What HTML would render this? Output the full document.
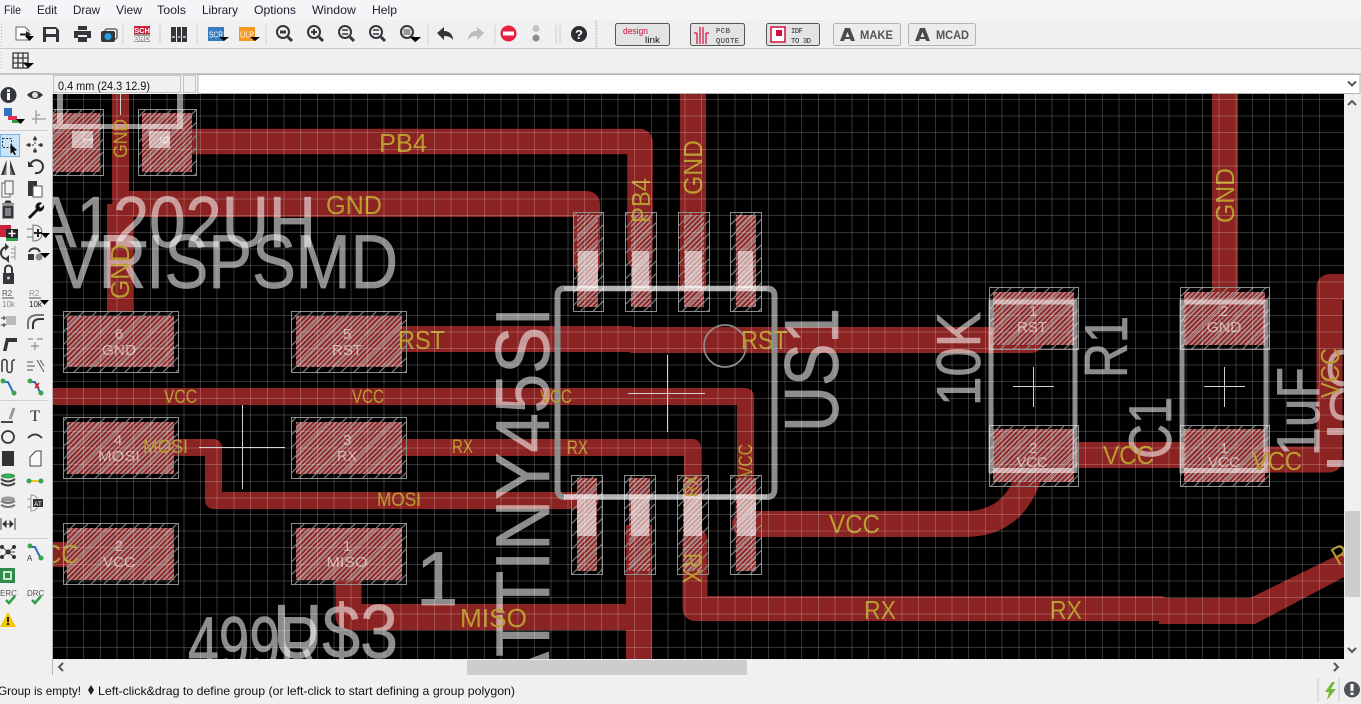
<!DOCTYPE html>
<html><head><meta charset="utf-8"><title>EAGLE board editor</title>
<style>
html,body{margin:0;padding:0;background:#f0f0f0;overflow:hidden}
svg{display:block;font-family:"Liberation Sans",sans-serif}
.m{font-size:12px;fill:#1c1c2c}
.g{fill:#b89c2c}
.l{fill:#fff;stroke:#fff;stroke-width:.7;opacity:.55}
.p{fill:#fff;opacity:.55;font-size:15px;text-anchor:middle}
.i{fill:#33373b}
.is{fill:none;stroke:#33373b;stroke-width:2}
</style></head><body>
<svg width="1361" height="704" viewBox="0 0 1361 704" xmlns="http://www.w3.org/2000/svg">
<defs>
<pattern id="h" width="3.500" height="3.500" patternUnits="userSpaceOnUse" patternTransform="rotate(-45)"><rect width="3.500" height="3.500" fill="#8b2323"/><rect width="3.500" height="1.600" fill="#bb8e8e"/></pattern>
<pattern id="s" width="9" height="9" patternUnits="userSpaceOnUse" patternTransform="rotate(-45)"><rect width="9" height="1" fill="#8c8c8c"/></pattern>
<clipPath id="c"><rect x="53" y="94" width="1291" height="565"/></clipPath>
</defs>
<rect width="1361" height="704" fill="#f0f0f0"/>
<rect width="1361" height="20" fill="#f4f5f7"/>
<text class="m" x="4" y="14" textLength="17" lengthAdjust="spacingAndGlyphs">File</text>
<text class="m" x="37" y="14" textLength="20" lengthAdjust="spacingAndGlyphs">Edit</text>
<text class="m" x="73" y="14" textLength="27" lengthAdjust="spacingAndGlyphs">Draw</text>
<text class="m" x="116" y="14" textLength="26" lengthAdjust="spacingAndGlyphs">View</text>
<text class="m" x="157" y="14" textLength="29" lengthAdjust="spacingAndGlyphs">Tools</text>
<text class="m" x="202" y="14" textLength="36" lengthAdjust="spacingAndGlyphs">Library</text>
<text class="m" x="254" y="14" textLength="42" lengthAdjust="spacingAndGlyphs">Options</text>
<text class="m" x="312" y="14" textLength="44" lengthAdjust="spacingAndGlyphs">Window</text>
<text class="m" x="372" y="14" textLength="25" lengthAdjust="spacingAndGlyphs">Help</text>
<rect y="48" width="1361" height="1" fill="#c8c8c8"/>
<rect y="73" width="1361" height="2" fill="#c8c8c8"/>
<path d="M1.5 24V46M1.5 52V70M597 22V47" stroke="#c0c0c0" stroke-dasharray="1 2"/>
<path d="M123 25V44M160 25V44M197 25V44M266 25V44M428 25V44M495 25V44M556 25V44M560 25V44M596 20V48" stroke="#cfcfcf"/>

<!-- top toolbar -->
<path d="M16 27H25L29 31V40H16Z" fill="#fff" stroke="#666"/><path d="M20 33.500H26V31L31 34.500 26 38V35.500H20Z" fill="#222"/><path d="M25 36H34L29.500 41Z" fill="#000"/>
<path class="i" d="M43 27H56L59 30V42H43ZM46 29V34H56V29ZM46 37V42H56V37Z" fill-rule="evenodd"/>
<path class="i" d="M78 26H87V30H78ZM74 31H91V38H87V35H78V38H74ZM78 37H87V42H78Z"/>
<rect x="105" y="29" width="12" height="10" rx="2" fill="none" stroke="#666" stroke-width="1.500"/><rect x="101" y="31" width="14" height="11" rx="2" fill="#33373b"/><circle cx="108" cy="36.500" r="3.500" fill="#29a0e0"/>
<rect x="134" y="26" width="16" height="8" fill="#c8233a"/><rect x="134" y="34" width="16" height="8" fill="#9a9a9a"/>
<text x="142" y="33" font-size="7.500" font-weight="bold" fill="#fff" text-anchor="middle">SCH</text>
<text x="142" y="41" font-size="7.500" font-weight="bold" fill="#fff" text-anchor="middle">BRD</text>
<path class="i" d="M171 27H176V42H171ZM177 27H181V42H177ZM182 27H187V42H182Z"/><path d="M172 37H175M178 37H180M183 37H186" stroke="#aaa" stroke-width="2"/>
<rect x="208" y="27" width="16" height="14" fill="#3a7cc0"/><text x="209" y="37.500" font-size="8" fill="#fff" textLength="14" lengthAdjust="spacingAndGlyphs">SCR</text><path d="M219 37H229L224 41Z" fill="#000"/>
<rect x="239" y="27" width="16" height="14" fill="#f59a1e"/><text x="240" y="37.500" font-size="8" fill="#fff" textLength="14" lengthAdjust="spacingAndGlyphs">ULP</text><path d="M250 37H260L255 41Z" fill="#000"/>
<g class="is" fill="none" stroke="#33373b" stroke-width="2">
<circle cx="283" cy="32" r="6"/><path d="M288 37L292 41" stroke-width="3"/><path d="M280 32H286" stroke-width="3"/>
<circle cx="314" cy="32" r="6"/><path d="M319 37L323 41" stroke-width="3"/><path d="M311 32H317M314 29V35"/>
<circle cx="345" cy="32" r="6"/><path d="M350 37L354 41" stroke-width="3"/><path d="M342 30H348M342 34H348" stroke-width="1.500"/>
<circle cx="376" cy="32" r="6"/><path d="M381 37L385 41" stroke-width="3"/><path d="M373 30H379M373 34H379" stroke-width="1.500"/>
<circle cx="407" cy="32" r="6"/><path d="M412 37L416 41" stroke-width="3"/></g>
<rect x="403.500" y="29" width="7" height="6" fill="#999"/><path d="M410 37H421L415.500 42Z" fill="#000"/>
<path class="i" d="M437 33L444 27V31C450 31 453 35 453 40 451 37 448 36 444 36V40Z"/>
<path fill="#bdbdbd" d="M484 33L477 27V31C471 31 468 35 468 40 470 37 473 36 477 36V40Z"/>
<circle cx="508.500" cy="33.500" r="8" fill="#e8203f"/><rect x="503" y="31.500" width="11" height="4" fill="#fff"/>
<circle cx="536" cy="28.500" r="3.500" fill="#c4c4c4"/><circle cx="536" cy="38" r="3.500" fill="#8c8c8c"/>
<circle cx="579" cy="34" r="8" fill="#2a2d31"/><text x="579" y="39" font-size="13" font-weight="bold" fill="#fff" text-anchor="middle">?</text>

<!-- buttons -->
<g stroke="#555" fill="#e3e3e3"><rect x="615.500" y="23.500" width="54" height="22" rx="2"/><rect x="690.500" y="23.500" width="54" height="22" rx="2"/><rect x="766.500" y="23.500" width="53" height="22" rx="2"/></g>
<g stroke="#b4b4b4" fill="#ececec"><rect x="833.500" y="23.500" width="67" height="22" rx="2"/><rect x="908.500" y="23.500" width="67" height="22" rx="2"/></g>
<text x="623" y="34" font-size="9" fill="#d0103a" textLength="25" lengthAdjust="spacingAndGlyphs">design</text>
<text x="645" y="43" font-size="9" fill="#111" textLength="15" lengthAdjust="spacingAndGlyphs">link</text>
<path d="M697 44V33M700 44V30M703 44V30M706 44V33M694 33H697M709 33H706M700 30V27M703 30V27" stroke="#d0103a" stroke-width="1.200" fill="none"/>
<text x="716" y="33" font-size="7" fill="#222" textLength="14" lengthAdjust="spacing" font-family="Liberation Mono">PCB</text>
<text x="716" y="43" font-size="7" fill="#222" textLength="23" lengthAdjust="spacing" font-family="Liberation Mono">QUOTE</text>
<rect x="771" y="27" width="14" height="15" fill="#fff" stroke="#d0103a" stroke-width="1.500"/><rect x="776" y="30" width="6" height="6" fill="#d0103a"/>
<text x="791" y="33" font-size="7" fill="#222" font-family="Liberation Mono" textLength="12" lengthAdjust="spacing">IDF</text>
<text x="791" y="43" font-size="7" fill="#222" font-family="Liberation Mono" textLength="20" lengthAdjust="spacing">TO 3D</text>
<path d="M845 28H850L855 41H851L847.500 32 844 41H840ZM843 37H851V39H843Z" fill="#4a4a4a"/>
<text x="860" y="39" font-size="12" font-weight="bold" fill="#555" textLength="33" lengthAdjust="spacingAndGlyphs">MAKE</text>
<path d="M920 28H925L930 41H926L922.500 32 919 41H915ZM918 37H926V39H918Z" fill="#4a4a4a"/>
<text x="936" y="39" font-size="12" font-weight="bold" fill="#555" textLength="33" lengthAdjust="spacingAndGlyphs">MCAD</text>

<!-- second toolbar -->
<path d="M13 53H28V68H13ZM18 53V68M23 53V68M13 58H28M13 63H28" fill="none" stroke="#33373b" stroke-width="1.300"/><path d="M23 63H34L28.500 68Z" fill="#000"/>

<!-- coordinate row -->
<rect x="53.500" y="75.500" width="127" height="17" fill="#f0f0f0" stroke="#c4c4c4"/>
<rect x="183.500" y="75.500" width="12" height="17" fill="#f0f0f0" stroke="#c4c4c4"/>
<rect x="198" y="74.500" width="1162" height="19" fill="#fff" stroke="#b4b4b4"/>
<path d="M1348 81.500L1352 85.500 1356 81.500" fill="none" stroke="#555" stroke-width="2"/>
<text x="58" y="90" font-size="12" fill="#111" textLength="92" lengthAdjust="spacingAndGlyphs">0.4 mm (24.3 12.9)</text>

<!-- canvas -->
<rect x="53" y="94" width="1291" height="565" fill="#000"/>
<g clip-path="url(#c)">
<!-- copper -->
<g fill="none" stroke="#8b2323" stroke-linejoin="round" stroke-linecap="round">
<path stroke-width="25.500" d="M180 141.500H640V258"/>
<path stroke-width="26" d="M693 90V290" stroke-linecap="butt"/>
<path stroke-width="26" d="M125 204H587V265"/>
<path stroke-width="26" d="M120 204V312" stroke-linecap="butt"/>
<path stroke-width="17" d="M120.500 90V200" stroke-linecap="butt"/>
<path stroke-width="26" d="M402 339H632" stroke-linecap="butt"/>
<path stroke-width="26" d="M630 340H1030" stroke-linecap="butt"/>
<path stroke-width="26" d="M1030 340H1031"/>
<path stroke-width="17" d="M50 396.500H745.500V480"/>
<path stroke-width="17" d="M402 447.500H692.500V480"/>
<path stroke-width="17" d="M170 447.500H213.500V500.500H590"/>
<path stroke-width="26" d="M348.500 575V617H639"/>
<path stroke-width="26" d="M639 525V665" stroke-linecap="butt"/>
<path stroke-width="25" d="M50 554.500H70" stroke-linecap="butt"/>
<path stroke-width="26" d="M745 524H965Q1012 524 1028 478"/>
<path stroke-width="26" d="M1075 455H1185" stroke-linecap="butt"/>
<path stroke-width="26" d="M1265 459.500H1329.500V287H1360"/>
<path stroke-width="26" d="M1225 90V300" stroke-linecap="butt"/>
<path stroke-width="25" d="M695 540V608.500H1160"/>
</g>
<path fill="#8b2323" d="M1159 598H1250L1350 549V574L1255 624H1159Z"/>
<!-- pads -->
<path fill="url(#h)" d="M53 113H100V172H53ZM142 113H192V172H142ZM67 316H174V367H67ZM296 316H402V367H296ZM67 422H174V474H67ZM296 422H402V474H296ZM67 528H174V580H67ZM296 528H402V580H296ZM577 215H598V307H577ZM631 215H651V307H631ZM684 215H704V307H684ZM736 215H756V307H736ZM577 478H597V571H577ZM629 478H650V571H629ZM683 478H702V571H683ZM736 478H756V571H736ZM993 292H1074V345H993ZM993 429H1074V482H993ZM1184 292H1265V345H1184ZM1184 429H1265V482H1184Z"/>
<path fill="url(#s)" stroke="#8c8c8c" d="M50.500 109.500H103.500V175.500H50.500ZM138.500 109.500H196.500V175.500H138.500ZM63.500 311.500H178.500V372.500H63.500ZM291.500 311.500H406.500V372.500H291.500ZM63.500 417.500H178.500V478.500H63.500ZM291.500 417.500H406.500V478.500H291.500ZM63.500 523.500H178.500V584.500H63.500ZM291.500 523.500H406.500V584.500H291.500ZM573.500 212.500H603.500V311.500H573.500ZM625.500 212.500H656.500V311.500H625.500ZM678.500 212.500H709.500V311.500H678.500ZM730.500 212.500H761.500V311.500H730.500ZM571.500 475.500H602.500V574.500H571.500ZM624.500 475.500H655.500V574.500H624.500ZM677.500 475.500H708.500V574.500H677.500ZM730.500 475.500H761.500V574.500H730.500ZM989.500 287.500H1078.500V349.500H989.500ZM989.500 425.500H1078.500V486.500H989.500ZM1180.500 287.500H1269.500V349.500H1180.500ZM1180.500 425.500H1269.500V486.500H1180.500Z"/>

<!-- docu overlays -->
<path fill="#fff" opacity=".55" d="M578 251H598V288H578ZM632 251H649V288H632ZM685 251H702V288H685ZM738 251H753V288H738ZM577 500H596V536H577ZM631 500H649V536H631ZM684 500H702V536H684ZM737 500H756V536H737ZM72 131H93V148H72ZM149 131H170V148H149Z"/>
<path fill="#fff" opacity=".55" d="M53 124H183V129H53ZM57 94H63V124H57ZM177 94H183V124H177Z"/>

<!-- IC outline -->
<path d="M564 288.500Q557.500 288.500 557.500 296V489Q557.500 497 565 497M767 288.500Q774.500 288.500 774.500 296V489Q774.500 497 767 497" fill="none" stroke="#8c8c8c" stroke-width="6"/>
<path d="M564 288.500H767M564 497H767" stroke="#fff" stroke-width="5.500" opacity=".7"/>
<circle cx="725" cy="346" r="21" fill="none" stroke="#8c8c8c" stroke-width="1.700"/>
<!-- R1 / C1 packages -->
<rect x="991" y="302" width="84" height="168.500" fill="none" stroke="#fff" stroke-width="5" opacity=".55"/>
<rect x="1182" y="302" width="84" height="168.500" fill="none" stroke="#fff" stroke-width="5" opacity=".55"/>
<!-- crosshairs -->
<path d="M628 393.500H705M667.500 355V432M199 447.500H285M242.500 405V489M1013 386.500H1054M1033.500 367V407M1204 386.500H1245M1224.500 367V407M120.500 94V115" stroke="#d0d0d0" stroke-width="1"/>

<!-- grey names / values -->
<g font-size="76">
<text class="l" x="33" y="247" font-size="72" textLength="283" lengthAdjust="spacingAndGlyphs">A1202UH</text>
<text class="l" x="55" y="288" textLength="343" lengthAdjust="spacingAndGlyphs">VRISPSMD</text>
<text class="l" transform="translate(549,699) rotate(-90)" textLength="392" lengthAdjust="spacingAndGlyphs">ATTINY45SI</text>
<text class="l" transform="translate(838,432) rotate(-90)" textLength="124" lengthAdjust="spacingAndGlyphs">US1</text>
<text class="l" transform="translate(980,406) rotate(-90)" font-size="62" textLength="94" lengthAdjust="spacingAndGlyphs">10K</text>
<text class="l" transform="translate(1127,378) rotate(-90)" font-size="60" textLength="62" lengthAdjust="spacingAndGlyphs">R1</text>
<text class="l" transform="translate(1171,459) rotate(-90)" font-size="60" textLength="62" lengthAdjust="spacingAndGlyphs">C1</text>
<text class="l" transform="translate(1319,456) rotate(-90)" font-size="60" textLength="89" lengthAdjust="spacingAndGlyphs">1uF</text>
<text class="l" x="416" y="605">1</text>
<text class="l" x="188" y="670" textLength="132" lengthAdjust="spacingAndGlyphs">499R</text>
<text class="l" x="273" y="658" textLength="125" lengthAdjust="spacingAndGlyphs">U$3</text>
</g>
<path d="M1327 428H1344V435H1327ZM1327 460H1344V467H1327Z" fill="#fff" opacity=".55"/>
<path d="M1344 352Q1330 352 1330 368T1344 384M1344 390Q1332 392 1332 405T1344 418" fill="none" stroke="#fff" stroke-width="5" opacity=".55"/>

<!-- pad names -->
<text class="p" x="119" y="339">6</text><text class="p" x="119" y="355" textLength="34" lengthAdjust="spacingAndGlyphs">GND</text>
<text class="p" x="347" y="339">5</text><text class="p" x="347" y="355" textLength="30" lengthAdjust="spacingAndGlyphs">RST</text>
<text class="p" x="118" y="445">4</text><text class="p" x="119" y="461" textLength="42" lengthAdjust="spacingAndGlyphs">MOSI</text>
<text class="p" x="347" y="445">3</text><text class="p" x="347" y="461" textLength="20" lengthAdjust="spacingAndGlyphs">RX</text>
<text class="p" x="119" y="551">2</text><text class="p" x="119" y="567" textLength="32" lengthAdjust="spacingAndGlyphs">VCC</text>
<text class="p" x="347" y="551">1</text><text class="p" x="347" y="567" textLength="41" lengthAdjust="spacingAndGlyphs">MISO</text>
<text class="p" x="1033" y="316">1</text><text class="p" x="1032" y="332" textLength="30" lengthAdjust="spacingAndGlyphs">RST</text>
<text class="p" x="1033" y="453">2</text><text class="p" x="1032" y="467" textLength="31" lengthAdjust="spacingAndGlyphs">VCC</text>
<text class="p" x="1224" y="316">2</text><text class="p" x="1224" y="332" textLength="35" lengthAdjust="spacingAndGlyphs">GND</text>
<text class="p" x="1224" y="453">1</text><text class="p" x="1224" y="467" textLength="32" lengthAdjust="spacingAndGlyphs">VCC</text>
<text class="p" transform="translate(93,140) rotate(-90)">1</text>
<text class="p" transform="translate(170,140) rotate(-90)">6</text>

<!-- gold signal names -->
<g font-size="26">
<text class="g" x="379" y="152" textLength="48" lengthAdjust="spacingAndGlyphs">PB4</text>
<text class="g" x="326" y="214" textLength="56" lengthAdjust="spacingAndGlyphs">GND</text>
<text class="g" x="398" y="349" textLength="47" lengthAdjust="spacingAndGlyphs">RST</text>
<text class="g" x="741" y="349" textLength="47" lengthAdjust="spacingAndGlyphs">RST</text>
<text class="g" x="829" y="533" textLength="51" lengthAdjust="spacingAndGlyphs">VCC</text>
<text class="g" x="864" y="619" textLength="32" lengthAdjust="spacingAndGlyphs">RX</text>
<text class="g" x="1050" y="619" textLength="32" lengthAdjust="spacingAndGlyphs">RX</text>
<text class="g" x="460" y="627" textLength="67" lengthAdjust="spacingAndGlyphs">MISO</text>
<text class="g" x="27" y="563" textLength="52" lengthAdjust="spacingAndGlyphs">VCC</text>
<text class="g" x="1103" y="464" textLength="51" lengthAdjust="spacingAndGlyphs">VCC</text>
<text class="g" x="1252" y="470" textLength="50" lengthAdjust="spacingAndGlyphs">VCC</text>
<text class="g" transform="translate(702,195) rotate(-90)" textLength="55" lengthAdjust="spacingAndGlyphs">GND</text>
<text class="g" transform="translate(650,223) rotate(-90)" textLength="45" lengthAdjust="spacingAndGlyphs">PB4</text>
<text class="g" transform="translate(129,299) rotate(-90)" textLength="55" lengthAdjust="spacingAndGlyphs">GND</text>
<text class="g" transform="translate(1234,223) rotate(-90)" textLength="55" lengthAdjust="spacingAndGlyphs">GND</text>
<text class="g" transform="translate(1339,398) rotate(-90)" textLength="50" lengthAdjust="spacingAndGlyphs">VCC</text>
<text class="g" transform="translate(683,553) rotate(90)" textLength="30" lengthAdjust="spacingAndGlyphs">RX</text>
<text class="g" transform="translate(1338,566) rotate(-30)" textLength="30" lengthAdjust="spacingAndGlyphs">RX</text>
</g>
<g font-size="19">
<text class="g" x="164" y="403" textLength="33" lengthAdjust="spacingAndGlyphs">VCC</text>
<text class="g" x="352" y="403" textLength="32" lengthAdjust="spacingAndGlyphs">VCC</text>
<text class="g" x="540" y="403" textLength="32" lengthAdjust="spacingAndGlyphs">VCC</text>
<text class="g" x="143" y="453" textLength="45" lengthAdjust="spacingAndGlyphs">MOSI</text>
<text class="g" x="452" y="453" textLength="21" lengthAdjust="spacingAndGlyphs">RX</text>
<text class="g" x="567" y="454" textLength="21" lengthAdjust="spacingAndGlyphs">RX</text>
<text class="g" x="377" y="506" textLength="44" lengthAdjust="spacingAndGlyphs">MOSI</text>
<text class="g" transform="translate(127,158) rotate(-90)" textLength="39" lengthAdjust="spacingAndGlyphs">GND</text>
<text class="g" transform="translate(752,477) rotate(-90)" textLength="33" lengthAdjust="spacingAndGlyphs">VCC</text>
<text class="g" transform="translate(698,497) rotate(-90)" textLength="22" lengthAdjust="spacingAndGlyphs">RX</text>
</g>

<!-- grid -->
<path fill="none" stroke="#fff" stroke-opacity=".2" shape-rendering="crispEdges" d="M50.200 94v565m16.700-565v565m16.700-565v565m16.700-565v565m16.700-565v565m16.700-565v565m16.700-565v565m16.700-565v565m16.700-565v565m16.700-565v565m16.700-565v565m16.700-565v565m16.700-565v565m16.700-565v565m16.700-565v565m16.700-565v565m16.700-565v565m16.700-565v565m16.700-565v565m16.700-565v565m16.700-565v565m16.700-565v565m16.700-565v565m16.700-565v565m16.700-565v565m16.700-565v565m16.700-565v565m16.700-565v565m16.700-565v565m16.700-565v565m16.700-565v565m16.700-565v565m16.700-565v565m16.700-565v565m16.700-565v565m16.700-565v565m16.700-565v565m16.700-565v565m16.700-565v565m16.700-565v565m16.700-565v565m16.700-565v565m16.700-565v565m16.700-565v565m16.700-565v565m16.700-565v565m16.700-565v565m16.700-565v565m16.700-565v565m16.700-565v565m16.700-565v565m16.700-565v565m16.700-565v565m16.700-565v565m16.700-565v565m16.700-565v565m16.700-565v565m16.700-565v565m16.700-565v565m16.700-565v565m16.700-565v565m16.700-565v565m16.700-565v565m16.700-565v565m16.700-565v565m16.700-565v565m16.700-565v565m16.700-565v565m16.700-565v565m16.700-565v565m16.700-565v565m16.700-565v565m16.700-565v565m16.700-565v565m16.700-565v565m16.700-565v565m16.700-565v565"/>
<path fill="none" stroke="#fff" stroke-opacity=".2" shape-rendering="crispEdges" d="M53 99.500h1291m-1291 16.600h1291m-1291 16.600h1291m-1291 16.600h1291m-1291 16.600h1291m-1291 16.600h1291m-1291 16.600h1291m-1291 16.600h1291m-1291 16.600h1291m-1291 16.600h1291m-1291 16.600h1291m-1291 16.600h1291m-1291 16.600h1291m-1291 16.600h1291m-1291 16.600h1291m-1291 16.600h1291m-1291 16.600h1291m-1291 16.600h1291m-1291 16.600h1291m-1291 16.600h1291m-1291 16.600h1291m-1291 16.600h1291m-1291 16.600h1291m-1291 16.600h1291m-1291 16.600h1291m-1291 16.600h1291m-1291 16.600h1291m-1291 16.600h1291m-1291 16.600h1291m-1291 16.600h1291m-1291 16.600h1291m-1291 16.600h1291m-1291 16.600h1291m-1291 16.600h1291"/>
</g>

<!-- scrollbars -->
<rect x="53" y="659" width="1291" height="16" fill="#f0f0f0"/>
<rect x="467" y="660" width="280" height="15" fill="#cdcdcd"/>
<path d="M63 663L59 667 63 671M1334 663L1338 667 1334 671" fill="none" stroke="#555" stroke-width="2"/>
<rect x="1345" y="511" width="15" height="86" fill="#cdcdcd"/>
<path d="M1348 648L1352 652 1356 648M1348 105L1352 101 1356 105" fill="none" stroke="#555" stroke-width="2"/>
<rect x="52" y="94" width="1" height="581" fill="#b8b8b8"/>

<!-- left toolbar -->
<circle cx="8.500" cy="95" r="8" fill="#33373b"/><rect x="7" y="93" width="3" height="7" fill="#fff"/><rect x="7" y="89.500" width="3" height="2.500" fill="#fff"/>
<path d="M27 95Q35 87 43 95Q35 103 27 95Z" fill="#33373b"/><circle cx="35" cy="95" r="3" fill="#ddd"/>
<rect x="4" y="108" width="8" height="8" fill="#2d6fc0"/><rect x="8" y="116" width="9" height="4" fill="#e0304a"/><rect x="12" y="120" width="8" height="3" fill="#2e9e46"/><path d="M16 119H25L20.500 124Z" fill="#000"/>
<path d="M36 110V124M32 119H46M36 114V118M40 115H36" stroke="#999" stroke-width="1.200" fill="none"/>
<rect x="0" y="130" width="48" height="1" fill="#d0d0d0"/>
<rect x=".5" y="134.500" width="19" height="22" fill="#cce4f7" stroke="#7ab4e4"/>
<rect x="2.500" y="138.500" width="9" height="9" fill="none" stroke="#333" stroke-dasharray="2 1.500"/><path d="M10.500 144L17 150 14 151 16 154.500 14.500 155 12.500 152 10.500 154Z" fill="#111"/>
<circle cx="35" cy="139" r="1.800" fill="#33373b"/><circle cx="35" cy="151" r="1.800" fill="#33373b"/><circle cx="29" cy="145" r="1.800" fill="#33373b"/><circle cx="41" cy="145" r="1.800" fill="#33373b"/><path d="M35 136V154M26 145H44" stroke="#33373b" stroke-dasharray="2 4" fill="none"/>
<path d="M6.500 160V175H1ZM10 160V175H15.500Z" fill="#33373b"/><path d="M6.500 166V175H3.500ZM10 166V175H13Z" fill="#777"/>
<path d="M30 166A6.500 6.500 0 1 1 35 173" fill="none" stroke="#33373b" stroke-width="2"/><path d="M28 161V167H34Z" fill="#33373b"/>
<path d="M2 183H10V197H2Z" fill="#fff" stroke="#666"/><path d="M5 181H13V194H5Z" fill="#f4f4f4" stroke="#555"/>
<path d="M28 181H37V196H28Z" fill="#33373b"/><path d="M33 186H42V197H33Z" fill="#fff" stroke="#555"/>
<path d="M2 204H14M5 203L6 201H10L11 203M3 206H13V218H3Z" fill="#33373b" stroke="#33373b"/><path d="M6 208V216M8 208V216M10 208V216" stroke="#ccc"/>
<path d="M28 217L36 209C34 204 39 201 42 203L39 206 41 208 44 205C45 209 41 213 38 211L30 219Z" fill="#111"/>
<rect y="225" width="11" height="12" fill="#c8233a"/><rect x="6" y="229" width="12" height="9" fill="#262626"/><rect x="6" y="238" width="12" height="3" fill="#2e9e46"/><path d="M12 230V237M8.500 233.500H15.500" stroke="#fff" stroke-width="1.500"/>
<path d="M33 225V241Q42 241 42 233T33 225ZM27 229H33M27 237H33" fill="#eee" stroke="#777"/><path d="M34 233H42M38 229V237" stroke="#222" stroke-width="2"/><path d="M41 233H50L45.500 238Z" fill="#000"/>
<path d="M7 247A6 6 0 0 0 7 259" fill="none" stroke="#33373b" stroke-width="2"/><path d="M5 243L9 247 5 251ZM9 255L5 259 9 263Z" fill="#33373b"/><path d="M11 249H15M11 253H15M11 257H15M15 246V260" stroke="#999" fill="none"/>
<rect x="28" y="254" width="6" height="6" fill="#33373b"/><circle cx="39" cy="257" r="3.500" fill="#888"/><path d="M29 252A6 6 0 0 1 40 252" fill="none" stroke="#33373b" stroke-width="2"/><path d="M40 253H50L45 258Z" fill="#000"/>
<path d="M3 273H14V284H3Z" fill="#33373b"/><path d="M5 273V269A3.500 3.500 0 0 1 12 269V273" fill="none" stroke="#33373b" stroke-width="2"/><circle cx="8.500" cy="278" r="1.500" fill="#ccc"/>
<text x="2" y="296" font-size="8" fill="#555">R2</text><path d="M2 298H14" stroke="#555"/><text x="2" y="307" font-size="8" fill="#888">10k</text>
<text x="29" y="296" font-size="8" fill="#999">R2</text><path d="M29 298H41" stroke="#555"/><text x="29" y="307" font-size="8" fill="#222">10k</text><path d="M40 300H49L44.500 305Z" fill="#000"/>
<rect x="6" y="316" width="10" height="9" fill="#bbb"/><path d="M1 318H6M4 316V320M1 325H6M4 323V327" stroke="#33373b"/>
<path d="M28 329V323Q28 315 38 315H44" fill="none" stroke="#777" stroke-width="2"/><path d="M33 329V325Q33 319 40 319H44" fill="none" stroke="#33373b" stroke-width="2"/>
<path d="M3 351L6 338H17V342H8.500L6.500 351" fill="#33373b"/>
<path d="M28 339H33M37 339H43M35 342V350M31 346H39" stroke="#777" fill="none"/>
<path d="M2 372V362A2.500 2.500 0 0 1 7 362V370A2.500 2.500 0 0 0 12 370V362A2.500 2.500 0 0 1 15 360" fill="none" stroke="#33373b" stroke-width="1.500"/>
<path d="M27 362H33M27 366H35M27 370H33M37 360L44 372M40 360L44 366" stroke="#555" fill="none"/>
<path d="M3 382H8L13 392" fill="none" stroke="#2d6fc0" stroke-width="2"/><circle cx="3" cy="381" r="2.500" fill="#3aa34e"/><circle cx="14" cy="393" r="2.500" fill="#3aa34e"/>
<path d="M30 382H35L40 392" fill="none" stroke="#2d6fc0" stroke-width="2"/><circle cx="30" cy="381" r="2.500" fill="#3aa34e"/><circle cx="41" cy="393" r="2.500" fill="#3aa34e"/><path d="M35 383L39 388M39 383L35 388" stroke="#d8103a" stroke-width="1.500"/>
<rect x="0" y="400" width="48" height="1" fill="#d0d0d0"/>
<path d="M1 422H13" stroke="#111" stroke-width="1.500"/><path d="M10 419L14 408" stroke="#999" stroke-width="3"/>
<text x="35" y="421" font-size="16" fill="#222" text-anchor="middle" font-family="Liberation Serif">T</text>
<circle cx="8" cy="437" r="6" fill="none" stroke="#33373b" stroke-width="1.800"/>
<path d="M28 438Q35 431 42 438" fill="none" stroke="#33373b" stroke-width="1.800"/>
<rect x="2" y="451" width="12" height="15" fill="#333"/>
<path d="M30 466V457L36 451H41V466Z" fill="#fafafa" stroke="#444"/>
<ellipse cx="8" cy="476" rx="7" ry="2.500" fill="#2e9e46"/><path d="M1 479Q8 484 15 479M1 483Q8 488 15 483" fill="none" stroke="#444" stroke-width="2"/><ellipse cx="8" cy="476" rx="4" ry="1" fill="#3cb35a"/>
<path d="M29 481H41" stroke="#f0c020" stroke-width="2"/><circle cx="29" cy="481" r="2.500" fill="#3aa34e"/><circle cx="41" cy="481" r="2.500" fill="#3aa34e"/>
<ellipse cx="8" cy="499" rx="7" ry="2.500" fill="#999"/><path d="M1 501Q8 505 15 501M1 505Q8 509 15 505" fill="none" stroke="#777" stroke-width="2"/>
<path d="M31 495V511Q38 511 38 503T31 495ZM27 499H31M27 507H31" fill="none" stroke="#999"/><rect x="33" y="499" width="10" height="8" fill="#333"/><text x="34" y="506" font-size="6.500" fill="#fff">AT</text>
<path d="M3 524H13M3 524L6 521V527ZM13 524L10 521V527ZM1 518V530M15 518V530" stroke="#33373b" fill="#33373b"/>
<rect x="0" y="538" width="48" height="1" fill="#d0d0d0"/>
<path d="M2 547L8 552 14 547M2 557L8 552 14 557M8 552H15" stroke="#555" fill="none"/><circle cx="8" cy="552" r="2.500" fill="#333"/><circle cx="2" cy="547" r="2" fill="#333"/><circle cx="14" cy="547" r="2" fill="#333"/><circle cx="2" cy="557" r="2" fill="#333"/><circle cx="14" cy="557" r="2" fill="#333"/>
<path d="M30 547H35L40 557" fill="none" stroke="#2d6fc0" stroke-width="2"/><circle cx="30" cy="546" r="2.500" fill="#3aa34e"/><circle cx="41" cy="558" r="2.500" fill="#3aa34e"/><text x="27" y="561" font-size="8" fill="#333">A</text>
<rect x="0" y="568" width="15" height="15" fill="#2e8b4a"/><rect x="3" y="571" width="9" height="9" fill="#cfe5cf"/><rect x="5" y="573" width="5" height="5" fill="#2e8b4a"/>
<text x="0" y="596" font-size="8" fill="#555">ERC</text><path d="M6 600L9 603 15 596" fill="none" stroke="#2e9e46" stroke-width="2.500"/>
<text x="27" y="596" font-size="8" fill="#555">DRC</text><path d="M32 600L35 603 41 596" fill="none" stroke="#2e9e46" stroke-width="2.500"/>
<path d="M8 612L16 627H0Z" fill="#f7c600"/><rect x="7" y="617" width="2" height="5" fill="#222"/><rect x="7" y="623" width="2" height="2" fill="#222"/>

<!-- status bar -->
<text x="-2" y="695" font-size="12" fill="#111" textLength="83" lengthAdjust="spacingAndGlyphs">Group is empty!</text>
<path d="M91 685L94 690 91 695 88 690Z" fill="#222"/>
<text x="98" y="695" font-size="12" fill="#111" textLength="417" lengthAdjust="spacingAndGlyphs">Left-click&amp;drag to define group (or left-click to start defining a group polygon)</text>
<path d="M1318 678V702M1339 678V702" stroke="#c8c8c8"/>
<path d="M1332 682L1325 692H1329L1327 700 1336 689H1331L1335 682Z" fill="#74b83a"/>
<circle cx="1352" cy="689.500" r="8" fill="#505458"/><rect x="1350.500" y="684" width="3" height="7" fill="#fff"/><rect x="1350.500" y="692.500" width="3" height="2.500" fill="#fff"/>
</svg>
</body></html>
